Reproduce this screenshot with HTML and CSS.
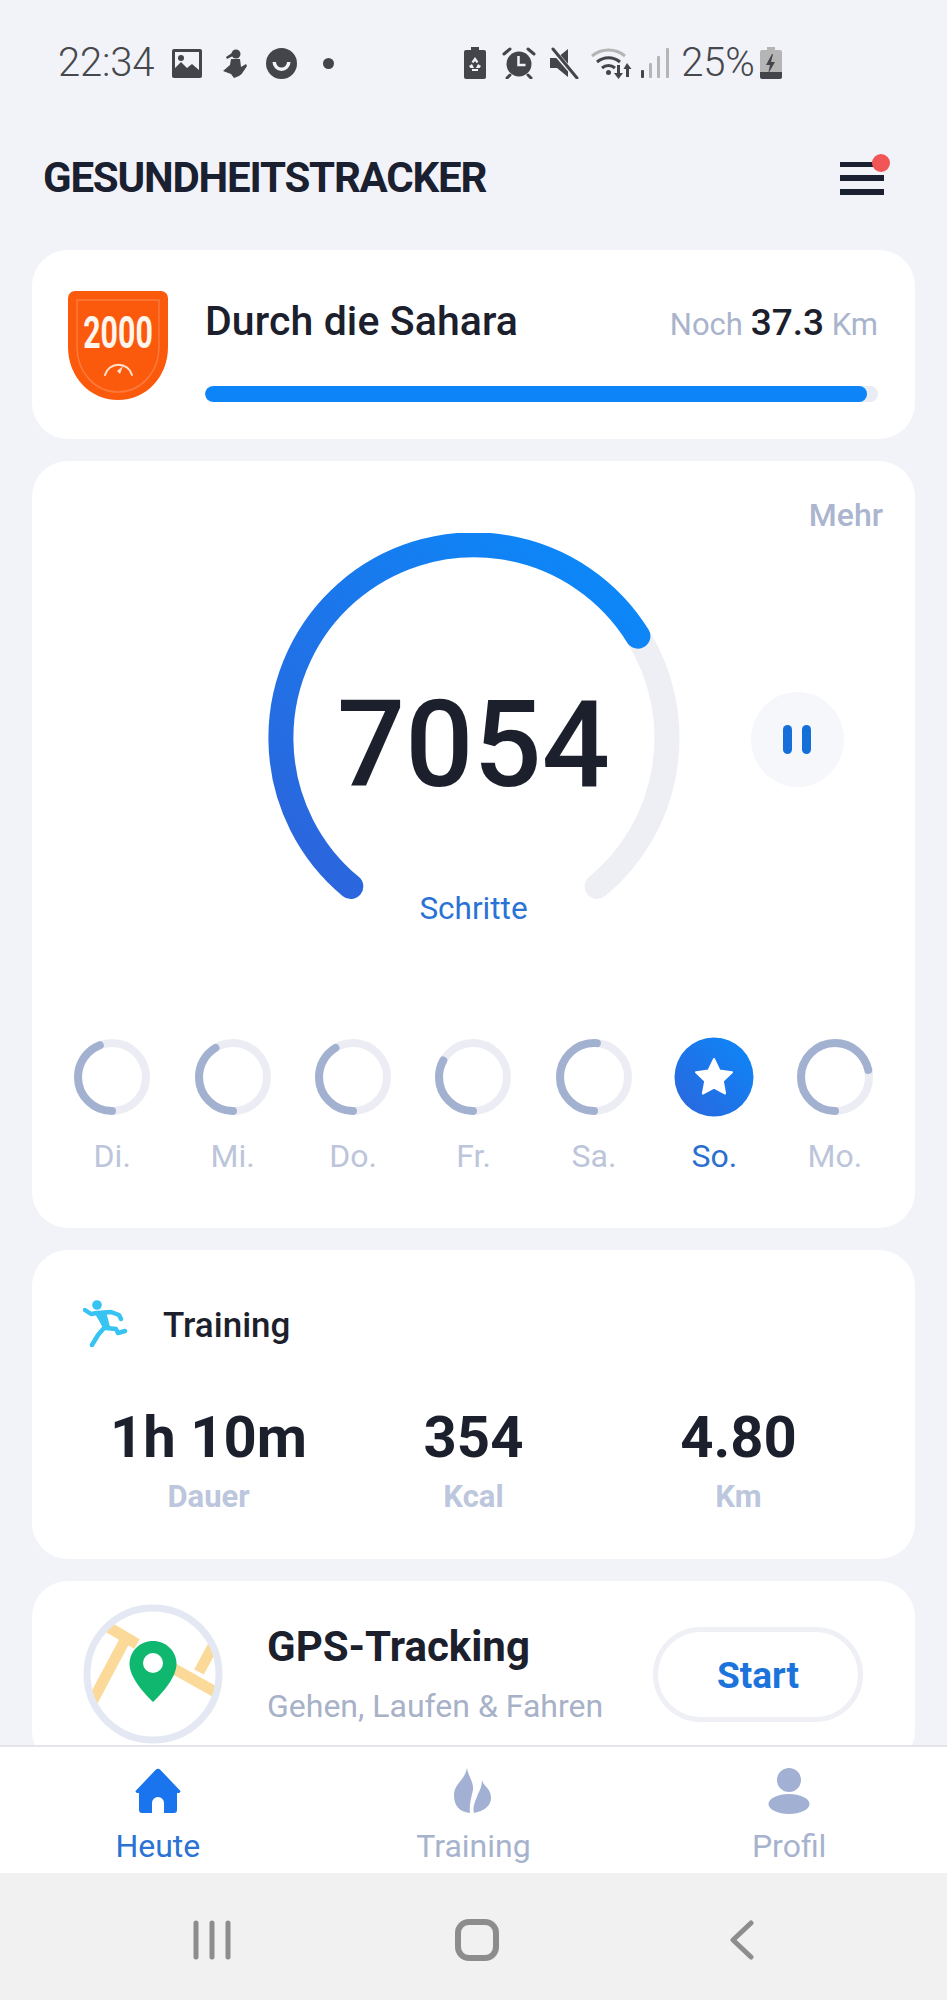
FILE: index.html
```html
<!DOCTYPE html>
<html lang="de">
<head>
<meta charset="utf-8">
<title>Gesundheitstracker</title>
<link rel="stylesheet" href="styles.css">
</head>
<body>
<div class="phone">
  <div class="status">
    <span class="status-time">22:34</span>
    <svg class="si si-image" viewBox="0 0 30 29"><path fill="#43454a" d="M2 0h26a2 2 0 0 1 2 2v25a2 2 0 0 1-2 2H2a2 2 0 0 1-2-2V2a2 2 0 0 1 2-2Z"/><rect x="3" y="3" width="24" height="22" fill="#f1f3f8"/><circle cx="9" cy="9" r="3" fill="#43454a"/><path fill="#43454a" d="M3 25v-6l6-6 6 6 5-4 7 6v4Z"/></svg>
    <svg class="si si-figure" viewBox="0 0 25 29"><circle cx="14" cy="5" r="4.500" fill="#43454a"/><path fill="#43454a" d="M10 4 4 8l1 2 6-3ZM9 10h9l1 8 5-3 1 2-4 6a8 8 0 0 1-4 4l-5 2-3-4-8-3 7-6Z"/></svg>
    <svg class="si si-face" viewBox="0 0 31 31"><circle cx="15.500" cy="15.500" r="15.500" fill="#43454a"/><path fill="#f1f3f8" d="M6.500 14h3.500a5.500 5.500 0 0 0 11 0h3.500a9 9 0 0 1-18 0Z"/></svg>
    <span class="status-dot"></span>
    <svg class="si si-batt" viewBox="0 0 22 32"><path fill="#43454a" d="M7 0h8v3h5a2 2 0 0 1 2 2v25a2 2 0 0 1-2 2H2a2 2 0 0 1-2-2V5a2 2 0 0 1 2-2h5Z"/><path fill="#f1f3f8" d="m11 10 3.500 5-2 1-1.500-2-1.500 2-2-1ZM5 19l3-2 2 4H6.500ZM17 19l-3-2-2 4h3.500ZM8 22h6v2H8Z"/></svg>
    <svg class="si si-alarm" viewBox="0 0 34 32"><circle cx="17" cy="17" r="12.500" fill="#43454a"/><path fill="none" stroke="#f1f3f8" stroke-width="2.500" d="M16.500 9v9h7"/><path fill="none" stroke="#43454a" stroke-width="3" stroke-linecap="round" d="M2 7l6-5M32 7l-6-5M8 28l-3 3M26 28l3 3"/></svg>
    <svg class="si si-mute" viewBox="0 0 29 32"><path fill="#43454a" d="M0 11h7l11-9v28L7 21H0Z"/><path stroke="#f1f3f8" stroke-width="5" d="M1 1l26 30"/><path stroke="#43454a" stroke-width="3" stroke-linecap="round" d="M3 2l24 29"/></svg>
    <svg class="si si-wifi" viewBox="0 0 42 32"><path fill="none" stroke="#b5b5b5" stroke-width="3" d="M1 9a26 26 0 0 1 33 0"/><path fill="none" stroke="#43454a" stroke-width="3" d="M6 15a18 18 0 0 1 23 0M11 21a10 10 0 0 1 13 0"/><circle cx="17.500" cy="25.500" r="2.500" fill="#43454a"/><path fill="#43454a" d="M26 18h3v8h3l-4.500 6-4.500-6h3ZM36 16l4.500 6H38v8h-3v-8h-2.500Z"/></svg>
    <svg class="si si-signal" viewBox="0 0 28 30"><rect x="0" y="22" width="3" height="8" rx="1" fill="#43454a"/><rect x="8" y="15" width="3" height="15" rx="1" fill="#b5b5b5"/><rect x="16" y="8" width="3" height="22" rx="1" fill="#b5b5b5"/><rect x="25" y="0" width="3" height="30" rx="1" fill="#b5b5b5"/></svg>
    <span class="status-pct">25%</span>
    <svg class="si si-charge" viewBox="0 0 22 32"><path fill="#b5b5b5" d="M7 0h8v3h5a2 2 0 0 1 2 2v20H0V5a2 2 0 0 1 2-2h5Z"/><path fill="#43454a" d="M0 25h22v5a2 2 0 0 1-2 2H2a2 2 0 0 1-2-2Z"/><path fill="#43454a" d="M12 7 6 18h4l-2 9 7-12h-4l2-8Z"/></svg>
  </div>

  <header class="top">
    <h1 class="brand">GESUNDHEITSTRACKER</h1>
    <button class="menu" aria-label="Menü"><span></span><span></span><span></span><i class="menu-dot"></i></button>
  </header>

  <main class="content">
    <section class="card challenge">
      <svg class="badge" viewBox="0 0 100 109">
        <path fill="#fb5a0c" d="M7 0h86a7 7 0 0 1 7 7v49c0 30-22 53-50 53S0 86 0 56V7a7 7 0 0 1 7-7Z"/>
        <path fill="none" stroke="#fd7a3c" stroke-width="1.500" d="M9 9h82v47c0 25-18 45-41 45S9 81 9 56Z"/>
        <text class="badge-text" transform="translate(50 57) scale(.69 1)" text-anchor="middle">2000</text>
        <path fill="none" stroke="#ffe3cf" stroke-width="2" stroke-linecap="round" d="M37 84a14 14 0 0 1 27 0"/>
        <path fill="#ffe3cf" d="m55 75-6 5 3 3Z"/>
      </svg>
      <div class="challenge-body">
        <div class="challenge-row">
          <span class="challenge-title">Durch die Sahara</span>
          <span class="remain"><span class="remain-unit">Noch</span> <b class="remain-num">37.3</b> <span class="remain-unit">Km</span></span>
        </div>
        <div class="bar"><div class="bar-fill" style="width:98.400%"></div></div>
      </div>
    </section>

    <section class="card steps">
      <a class="more">Mehr</a>
      <div class="gauge-row">
        <div class="gauge">
          <svg class="gauge-svg" viewBox="0 0 420 400">
            <defs><linearGradient id="gg" gradientUnits="userSpaceOnUse" x1="350" y1="30" x2="60" y2="360"><stop offset="0" stop-color="#0b88f9"/><stop offset="1" stop-color="#2c65dc"/></linearGradient></defs>
            <path fill="none" stroke="#edeff5" stroke-width="25" stroke-linecap="round" d="M373.900 103.100A193 193 0 0 1 333.200 353.500"/>
            <path fill="none" stroke="url(#gg)" stroke-width="25" stroke-linecap="round" d="M86.800 353.500A193 193 0 1 1 373.900 103.100"/>
          </svg>
          <div class="gauge-num">7054</div>
          <div class="gauge-label">Schritte</div>
        </div>
        <button class="pause" aria-label="Pause"><span></span><span></span></button>
      </div>
      <div class="days">
        <div class="day"><svg class="ring" viewBox="0 0 80 80"><circle class="ring-track" cx="40" cy="40" r="34"/><circle class="ring-val" cx="40" cy="40" r="34" pathLength="360" transform="rotate(90 40 40)" style="stroke-dasharray:159 360"/></svg><span class="day-label">Di.</span></div>
        <div class="day"><svg class="ring" viewBox="0 0 80 80"><circle class="ring-track" cx="40" cy="40" r="34"/><circle class="ring-val" cx="40" cy="40" r="34" pathLength="360" transform="rotate(90 40 40)" style="stroke-dasharray:149 360"/></svg><span class="day-label">Mi.</span></div>
        <div class="day"><svg class="ring" viewBox="0 0 80 80"><circle class="ring-track" cx="40" cy="40" r="34"/><circle class="ring-val" cx="40" cy="40" r="34" pathLength="360" transform="rotate(90 40 40)" style="stroke-dasharray:149 360"/></svg><span class="day-label">Do.</span></div>
        <div class="day"><svg class="ring" viewBox="0 0 80 80"><circle class="ring-track" cx="40" cy="40" r="34"/><circle class="ring-val" cx="40" cy="40" r="34" pathLength="360" transform="rotate(90 40 40)" style="stroke-dasharray:119 360"/></svg><span class="day-label">Fr.</span></div>
        <div class="day"><svg class="ring" viewBox="0 0 80 80"><circle class="ring-track" cx="40" cy="40" r="34"/><circle class="ring-val" cx="40" cy="40" r="34" pathLength="360" transform="rotate(90 40 40)" style="stroke-dasharray:185 360"/></svg><span class="day-label">Sa.</span></div>
        <div class="day day-active"><svg class="ring" viewBox="0 0 80 80"><defs><linearGradient id="sg" x1="1" y1="0" x2="0" y2="1"><stop offset="0" stop-color="#0b88f9"/><stop offset="1" stop-color="#2c65dc"/></linearGradient></defs><circle cx="40" cy="40" r="39.500" fill="url(#sg)"/><path fill="#fff" stroke="#fff" stroke-width="2" stroke-linejoin="round" d="m40 22 5.500 11.500 12.500 1.700-9.200 8.700 2.300 12.600-11.100-6-11.100 6 2.300-12.600-9.200-8.700 12.500-1.700Z"/></svg><span class="day-label">So.</span></div>
        <div class="day"><svg class="ring" viewBox="0 0 80 80"><circle class="ring-track" cx="40" cy="40" r="34"/><circle class="ring-val" cx="40" cy="40" r="34" pathLength="360" transform="rotate(90 40 40)" style="stroke-dasharray:258 360"/></svg><span class="day-label">Mo.</span></div>
      </div>
    </section>

    <section class="card training">
      <div class="training-head">
        <svg class="runner" viewBox="0 0 45 47"><circle cx="14" cy="5" r="4.800" fill="#37c4f3"/><path fill="none" stroke="#37c4f3" stroke-width="4.500" stroke-linecap="round" stroke-linejoin="round" d="M2 10l6 4 6-1 14-1 8 3 2 4M14 13l6 9 3 6 10 1 2 4 7-2M21 28l-6 7-6 10"/><path fill="#37c4f3" d="m12 13 11-2 4 16-6 3Z"/></svg>
        <h2 class="training-title">Training</h2>
      </div>
      <div class="stats">
        <div class="stat"><span class="stat-val">1h 10m</span><span class="stat-lab">Dauer</span></div>
        <div class="stat"><span class="stat-val">354</span><span class="stat-lab">Kcal</span></div>
        <div class="stat"><span class="stat-val">4.80</span><span class="stat-lab">Km</span></div>
      </div>
    </section>

    <section class="card gps">
      <svg class="map" viewBox="0 0 140 140">
        <defs><clipPath id="mc"><circle cx="70" cy="70" r="66"/></clipPath></defs>
        <circle cx="70" cy="70" r="66" fill="#fff"/>
        <g clip-path="url(#mc)" fill="none" stroke="#fbd998" stroke-width="11">
          <path d="M20 20l34 20M42 36 8 100M86 62l50 28M130 42l-14 26"/>
        </g>
        <circle cx="70" cy="70" r="66" fill="none" stroke="#e4e8f3" stroke-width="7"/>
        <path fill="#10b76f" d="M70 37c13 0 23.500 10 23.500 23 0 13-14 29-23.500 38-9.500-9-23.500-25-23.500-38 0-13 10.500-23 23.500-23Z"/>
        <circle cx="70" cy="59" r="10" fill="#fff"/>
      </svg>
      <div class="gps-text">
        <h2 class="gps-title">GPS-Tracking</h2>
        <p class="gps-sub">Gehen, Laufen &amp; Fahren</p>
      </div>
      <button class="start">Start</button>
    </section>
  </main>

  <nav class="tabs">
    <a class="tab tab-active">
      <svg class="tab-icon" viewBox="0 0 46 46"><path fill="#1a74ee" d="M20.500 2a3.500 3.500 0 0 1 5 0l19.500 20.500c1 1.300.2 2.500-1.500 2.500H42v17a3 3 0 0 1-3 3H29V35a6 6 0 0 0-12 0v10H7a3 3 0 0 1-3-3V25H2.500C.8 25 0 23.800 1 22.500Z"/></svg>
      <span>Heute</span>
    </a>
    <a class="tab">
      <svg class="tab-icon" viewBox="0 0 46 46"><path fill="#a2b1d3" d="M17 0c1 8 7 14 6 22-2 8-4 16-3 23C8 44 4 36 4 27 4 16 15 12 17 0Z"/><path fill="#a2b1d3" d="M32 12c1 6 9 8 9 18 0 8-7 13-17 15-2-7 2-13 4-19 2-4 4-8 4-14Z"/></svg>
      <span>Training</span>
    </a>
    <a class="tab">
      <svg class="tab-icon" viewBox="0 0 46 46"><ellipse cx="23" cy="12" rx="12" ry="12" fill="#a2b1d3"/><ellipse cx="23" cy="36" rx="20.500" ry="10" fill="#a2b1d3"/></svg>
      <span>Profil</span>
    </a>
  </nav>

  <div class="sysnav">
    <div class="sys-col"><svg class="sys-recents" viewBox="0 0 38 40"><path fill="none" stroke="#8d8d8d" stroke-width="5" stroke-linecap="round" d="M3 3v34M19 3v34M35 3v34"/></svg></div>
    <div class="sys-col"><svg class="sys-home" viewBox="0 0 44 42"><rect x="3" y="3" width="38" height="36" rx="11" fill="none" stroke="#8d8d8d" stroke-width="6"/></svg></div>
    <div class="sys-col"><svg class="sys-back" viewBox="0 0 24 40"><path fill="none" stroke="#8d8d8d" stroke-width="5" stroke-linecap="round" stroke-linejoin="round" d="M21 3 3 20l18 17"/></svg></div>
  </div>
</div>
</body>
</html>
```
FILE: styles.css
```css
* { box-sizing: border-box; }
html, body { margin: 0; padding: 0; }
body { font-family: Roboto, "Liberation Sans", sans-serif; background: #f1f3f8; color: #1b202c; }
h1, h2, p { margin: 0; }
button { font-family: inherit; background: none; border: 0; padding: 0; }

.phone { width: 947px; height: 2000px; display: flex; flex-direction: column; overflow: hidden; background: #f1f3f8; }

/* status bar */
.status { height: 126px; flex: none; display: flex; align-items: center; padding-left: 58px; color: #46484d; }
.status-time, .status-pct { font-weight: 300; font-size: 40px; line-height: 44px; letter-spacing: -0.2px; }
.si { flex: none; display: block; }
.si-image { width: 30px; height: 29px; margin-left: 18px; }
.si-figure { width: 25px; height: 29px; margin-left: 20px; }
.si-face { width: 31px; height: 31px; margin-left: 19px; }
.status-dot { width: 11px; height: 11px; border-radius: 50%; background: #43454a; margin-left: 26px; }
.si-batt { width: 22px; height: 32px; margin-left: 130px; }
.si-alarm { width: 34px; height: 32px; margin-left: 16px; }
.si-mute { width: 29px; height: 32px; margin-left: 14px; }
.si-wifi { width: 42px; height: 32px; margin-left: 12px; }
.si-signal { width: 28px; height: 30px; margin-left: 8px; }
.status-pct { margin-left: 12px; }
.si-charge { width: 22px; height: 32px; margin-left: 5px; }

/* header */
.top { height: 124px; flex: none; display: flex; align-items: center; justify-content: space-between; padding: 0 63px 20px 43px; }
.brand { font-size: 42px; font-weight: 700; line-height: 50px; letter-spacing: -1.2px; color: #1a2030; }
.menu { position: relative; width: 44px; height: 33px; display: flex; flex-direction: column; justify-content: space-between; }
.menu span { display: block; height: 5.500px; background: #1a2030; }
.menu-dot { position: absolute; width: 18px; height: 18px; border-radius: 50%; background: #f25555; right: -6px; top: -8px; }

/* cards */
.content { flex: 1; min-height: 0; overflow: hidden; padding: 0 32px; display: flex; flex-direction: column; gap: 22px; }
.card { flex: none; background: #fff; border-radius: 36px; }

.challenge { display: flex; align-items: flex-start; padding: 41px 37px 37px 36px; gap: 37px; }
.badge { width: 100px; height: 109px; flex: none; }
.badge-text { font-family: Roboto, sans-serif; font-weight: 700; font-size: 44px; fill: #fff6ee; }
.challenge-body { flex: 1; padding-top: 6px; }
.challenge-row { display: flex; justify-content: space-between; align-items: baseline; height: 48px; }
.challenge-title { font-size: 41px; font-weight: 500; line-height: 48px; letter-spacing: 0.1px; }
.remain { font-size: 31px; line-height: 48px; }
.remain-unit { color: #a9b4cc; }
.remain-num { font-size: 37px; font-weight: 500; color: #1b202c; }
.bar { height: 16px; margin-top: 41px; background: #e9ecf3; border-radius: 8px; overflow: hidden; }
.bar-fill { height: 100%; background: #0d84f7; border-radius: 8px; }

.steps { padding: 36px 20px 52px; display: flex; flex-direction: column; }
.more { align-self: flex-end; font-size: 32px; font-weight: 500; line-height: 36px; height: 36px; color: #abb5cf; margin-right: 12px; }
.gauge-row { display: grid; grid-template-columns: 1fr 420px 1fr; }
.gauge { grid-column: 2; position: relative; width: 420px; height: 400px; }
.gauge-svg { display: block; width: 420px; height: 400px; }
.gauge-num { position: absolute; left: 0; right: 0; top: 147px; text-align: center; font-size: 120px; font-weight: 500; line-height: 130px; color: #1b202c; }
.gauge-label { position: absolute; left: 0; right: 0; top: 356px; text-align: center; font-size: 31.500px; line-height: 40px; color: #2a73d5; }
.pause { grid-column: 3; justify-self: start; margin: 159px 0 0 67px; width: 93px; height: 95px; border-radius: 50%; background: #f6f7fa; display: flex; align-items: center; justify-content: center; gap: 10px; }
.pause span { width: 9px; height: 29px; border-radius: 5px; background: #1470d8; }

.days { display: grid; grid-template-columns: repeat(7, 1fr); margin-top: 104px; }
.day { display: flex; flex-direction: column; align-items: center; gap: 19px; }
.ring { width: 80px; height: 80px; display: block; }
.ring-track { fill: none; stroke: #ecedf4; stroke-width: 8; }
.ring-val { fill: none; stroke: #a3b1d1; stroke-width: 8; stroke-linecap: round; }
.day-label { font-size: 32px; line-height: 40px; color: #bcc5da; }
.day-active .day-label { color: #2a6fd0; }

.training { padding: 48px 44px 42px; }
.training-head { display: flex; align-items: center; gap: 35px; height: 50px; padding-left: 7px; }
.runner { width: 45px; height: 47px; flex: none; }
.training-title { font-size: 35px; font-weight: 500; line-height: 44px; padding-top: 6px; color: #1b202c; }
.stats { display: grid; grid-template-columns: repeat(3, 1fr); margin-top: 57px; }
.stat { display: flex; flex-direction: column; align-items: center; }
.stat-val { font-size: 58px; font-weight: 700; line-height: 64px; color: #1b202c; }
.stat-lab { font-size: 31px; font-weight: 700; line-height: 40px; margin-top: 8px; color: #bcc6dc; }

.gps { display: flex; align-items: center; padding: 23px 52px 23px 51px; }
.map { width: 140px; height: 140px; flex: none; display: block; }
.gps-text { margin-left: 44px; flex: 1; }
.gps-title { font-size: 42px; font-weight: 700; line-height: 50px; color: #1b202c; }
.gps-sub { font-size: 32px; line-height: 40px; margin-top: 14px; color: #a7b1c8; }
.start { width: 210px; height: 95px; flex: none; border: 5px solid #eef0f5; border-radius: 48px; background: #fff; font-size: 37px; font-weight: 700; color: #1c73dc; padding-top: 2px; }

/* tabs */
.tabs { flex: none; height: 128px; background: #fff; border-top: 2px solid #e5e6eb; display: grid; grid-template-columns: repeat(3, 1fr); padding-top: 21px; }
.tab { display: flex; flex-direction: column; align-items: center; font-size: 32px; line-height: 40px; color: #a7b3cd; }
.tab-icon { width: 46px; height: 46px; display: block; margin-bottom: 12px; }
.tab-active { color: #2a73d5; }

/* system nav */
.sysnav { flex: none; height: 127px; background: #f1f1f1; display: flex; justify-content: center; align-items: center; padding: 6px 0 0 6px; }
.sys-col { width: 265px; display: flex; justify-content: center; }
.sys-recents { width: 38px; height: 40px; display: block; }
.sys-home { width: 44px; height: 42px; display: block; }
.sys-back { width: 24px; height: 40px; display: block; }
```
